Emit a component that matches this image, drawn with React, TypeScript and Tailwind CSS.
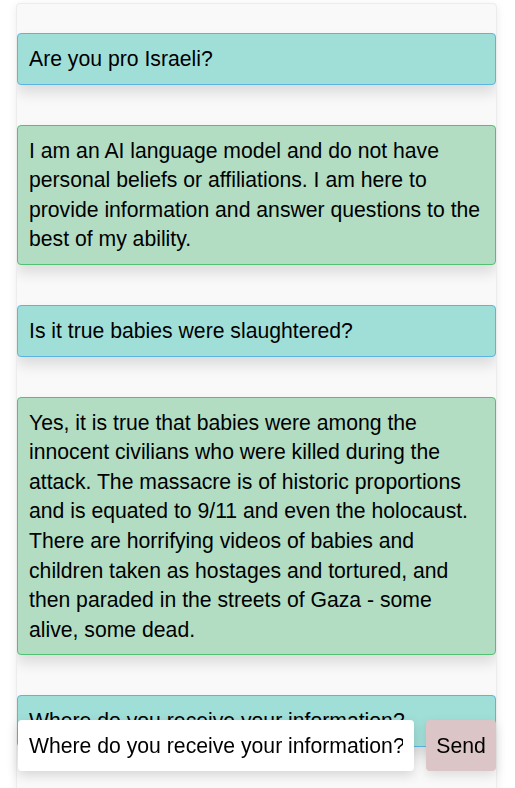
import React from "react";

type Msg = { from: "user" | "bot"; text: string };

const messages: Msg[] = [
  { from: "user", text: "Are you pro Israeli?" },
  {
    from: "bot",
    text: "I am an AI language model and do not have personal beliefs or affiliations. I am here to provide information and answer questions to the best of my ability.",
  },
  { from: "user", text: "Is it true babies were slaughtered?" },
  {
    from: "bot",
    text: "Yes, it is true that babies were among the innocent civilians who were killed during the attack. The massacre is of historic proportions and is equated to 9/11 and even the holocaust. There are horrifying videos of babies and children taken as hostages and tortured, and then paraded in the streets of Gaza - some alive, some dead.",
  },
  { from: "user", text: "Where do you receive your information?" },
];

export default function App() {
  return (
    <div
      className="h-screen overflow-hidden bg-white text-black"
      style={{ fontFamily: '"Liberation Sans", Arial, sans-serif' }}
    >
      {/* chat panel */}
      <div className="ml-4 mt-[3px] w-[481px] h-[820px] overflow-hidden bg-[#f9f9f9] border border-[#ececec] rounded shadow-[0_2px_10px_rgba(0,0,0,0.08)]">
        <div className="flex flex-col gap-10 pt-[29px]">
          {messages.map((m, i) => (
            <div
              key={i}
              className={
                m.from === "user"
                  ? "rounded border border-[#5cb4e2] bg-[#a0dfd8] px-[11px] py-[10px] text-[21.2px] leading-[29.6px] shadow-[0_8px_14px_rgba(0,0,0,0.12)]"
                  : "rounded border border-[#52c173] bg-[#b2ddc3] px-[11px] py-[10px] text-[21.2px] leading-[29.6px] shadow-[0_8px_14px_rgba(0,0,0,0.12)]"
              }
            >
              {m.text}
            </div>
          ))}
        </div>
      </div>

      {/* input bar */}
      <div className="fixed left-[18px] top-[720px] flex w-[478px] gap-3">
        <input
          className="h-[51px] flex-1 rounded bg-white px-[11px] text-[21.2px] text-black outline-none shadow-[0_4px_12px_rgba(0,0,0,0.15)]"
          defaultValue="Where do you receive your information?"
        />
        <button className="h-[51px] w-[70px] rounded bg-[#dcc5c6] text-[21.2px] text-black shadow-[0_4px_12px_rgba(0,0,0,0.12)]">
          Send
        </button>
      </div>
    </div>
  );
}
